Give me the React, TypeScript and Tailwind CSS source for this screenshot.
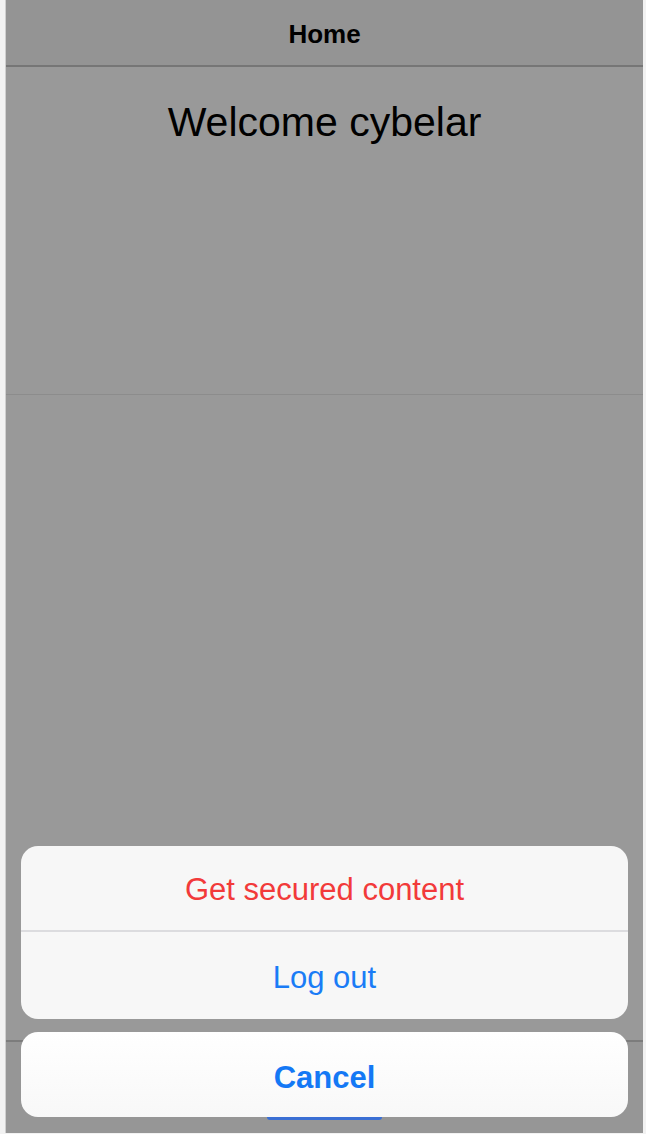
export default function App() {
  return (
    <div className="flex h-[1134px] w-[646px] bg-[#f2f2f2] pl-[5px] pr-[3px] pb-px font-['Liberation_Sans',Arial,sans-serif]">
      <div className="relative flex flex-1 flex-col border-l border-[#cfcfcf] bg-[#999999]">
        <header className="flex h-[67px] items-center justify-center border-b-2 border-[#767676] bg-[#949494] pt-[3px]">
          <h1 className="text-[26px] font-bold text-black">Home</h1>
        </header>
        <section className="h-[328px] border-b border-[#8c8c8c] pt-[32px] text-center">
          <p className="text-[41px] leading-[47px] text-black">Welcome cybelar</p>
        </section>
        <main className="flex-1" />
        <nav className="relative h-[93px] border-t-2 border-[#7c7c7c] bg-[#969696]">
          <div className="absolute left-[261px] top-[75px] h-[3px] w-[115px] rounded-b bg-[#3a6fd4]" />
        </nav>

        {/* action sheet */}
        <div className="absolute inset-0 flex flex-col justify-end gap-[13px] px-[15px] pb-[16px]">
          <div className="overflow-hidden rounded-[17px] bg-[#f7f7f7]">
            <button className="flex h-[86px] w-full items-center justify-center border-b-2 border-[#dcdcdf] pt-[4px] text-[31px] text-[#f23a3a]">
              Get secured content
            </button>
            <button className="flex h-[87px] w-full items-center justify-center pt-[5px] text-[31px] text-[#1a7cf6]">
              Log out
            </button>
          </div>
          <button className="flex h-[85px] w-full items-center justify-center rounded-[17px] bg-gradient-to-b from-white to-[#f8f8f8] pt-[7px] text-[31px] font-bold text-[#1478f5]">
            Cancel
          </button>
        </div>
      </div>
    </div>
  )
}
